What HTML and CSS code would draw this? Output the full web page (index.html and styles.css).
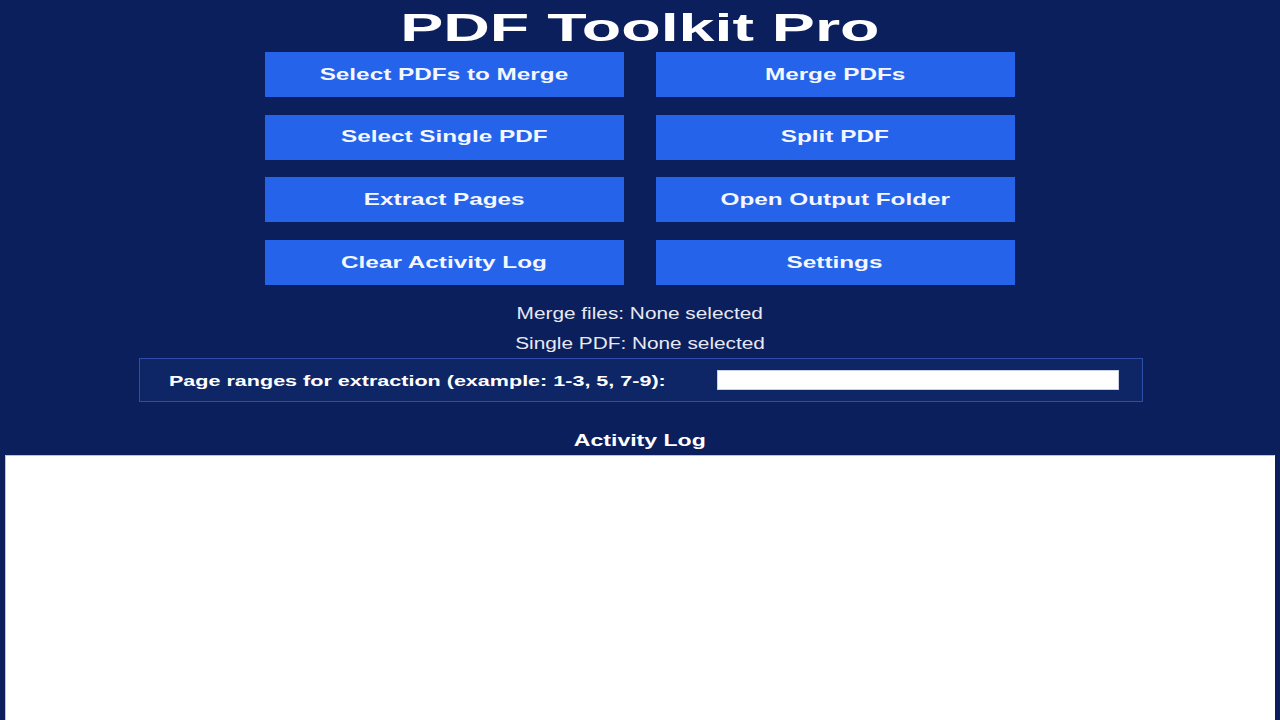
FILE: index.html
```html
<!DOCTYPE html>
<html lang="en">
<head>
<meta charset="utf-8">
<title>PDF Toolkit Pro</title>
<link rel="stylesheet" href="styles.css">
</head>
<body>
<main class="app">
  <h1 class="title"><span class="wide">PDF Toolkit Pro</span></h1>
  <div class="actions">
    <button class="btn"><span class="wide">Select PDFs to Merge</span></button>
    <button class="btn"><span class="wide">Merge PDFs</span></button>
    <button class="btn"><span class="wide">Select Single PDF</span></button>
    <button class="btn"><span class="wide">Split PDF</span></button>
    <button class="btn"><span class="wide">Extract Pages</span></button>
    <button class="btn"><span class="wide">Open Output Folder</span></button>
    <button class="btn"><span class="wide">Clear Activity Log</span></button>
    <button class="btn"><span class="wide">Settings</span></button>
  </div>
  <p class="status first"><span class="wide">Merge files: None selected</span></p>
  <p class="status"><span class="wide">Single PDF: None selected</span></p>
  <div class="range-box">
    <label class="range-label" for="ranges"><span class="wide">Page ranges for extraction (example: 1-3, 5, 7-9):</span></label>
    <input class="range-input" id="ranges" type="text">
  </div>
  <h2 class="log-title"><span class="wide">Activity Log</span></h2>
  <textarea class="log" aria-label="Activity Log"></textarea>
</main>
</body>
</html>
```

FILE: styles.css
```css
html, body {
  margin: 0;
  padding: 0;
}

body {
  width: 1280px;
  height: 720px;
  overflow: hidden;
  background: #0b1f5c;
  font-family: "Liberation Sans", Arial, sans-serif;
  color: #ffffff;
}

.app {
  display: flex;
  flex-direction: column;
  align-items: center;
}

.wide {
  display: inline-block;
  white-space: nowrap;
  transform-origin: center center;
}

.title {
  margin: 0;
  height: 48px;
  padding-top: 4px;
  line-height: 48px;
  font-size: 39px;
  font-weight: bold;
  text-align: center;
  color: #ffffff;
}

.title .wide {
  transform: scaleX(1.655);
}

.actions {
  display: grid;
  grid-template-columns: 359px 359px;
  column-gap: 32px;
  row-gap: 17.7px;
  margin-right: 1px;
}

.btn {
  height: 45px;
  padding: 0;
  border: none;
  border-radius: 0;
  background: #2563eb;
  color: #f4f7ff;
  font-family: "Liberation Sans", Arial, sans-serif;
  font-size: 17px;
  font-weight: bold;
  text-align: center;
  cursor: pointer;
}

.btn .wide {
  transform: scaleX(1.43);
}

.status {
  margin: 0;
  height: 30px;
  line-height: 30px;
  font-size: 16px;
  color: #e6e9f2;
  text-align: center;
}

.status.first {
  margin-top: 14px;
}

.status + .range-box {
  margin-top: -1px;
}

.status .wide {
  transform: scaleX(1.3);
}

.range-box {
  box-sizing: border-box;
  width: 1004px;
  height: 44px;
  margin-left: 1px;
  display: flex;
  align-items: center;
  justify-content: space-between;
  padding: 0 23px 0 29px;
  border: 1px solid #2d4ea6;
  background: #0f2666;
}

.range-label {
  font-size: 15px;
  font-weight: bold;
  color: #ffffff;
}

.range-label .wide {
  transform-origin: left center;
  transform: scaleX(1.436);
}

.range-input {
  box-sizing: border-box;
  width: 402px;
  height: 20px;
  margin: 0;
  padding: 0 4px;
  border: 1px solid #c9d0e6;
  background: #ffffff;
  outline: none;
}

.log-title {
  margin: 24px 0 0 0;
  height: 30px;
  line-height: 30px;
  font-size: 16px;
  font-weight: bold;
  color: #ffffff;
  text-align: center;
}

.log-title .wide {
  transform: scaleX(1.44);
}

.log {
  box-sizing: border-box;
  display: block;
  width: 1270px;
  height: 290px;
  margin: -1px 0 0 0;
  padding: 4px;
  border: 1px solid #b8c2e8;
  border-right-color: #ffffff;
  border-bottom: none;
  background: #ffffff;
  resize: none;
  outline: none;
}
```
